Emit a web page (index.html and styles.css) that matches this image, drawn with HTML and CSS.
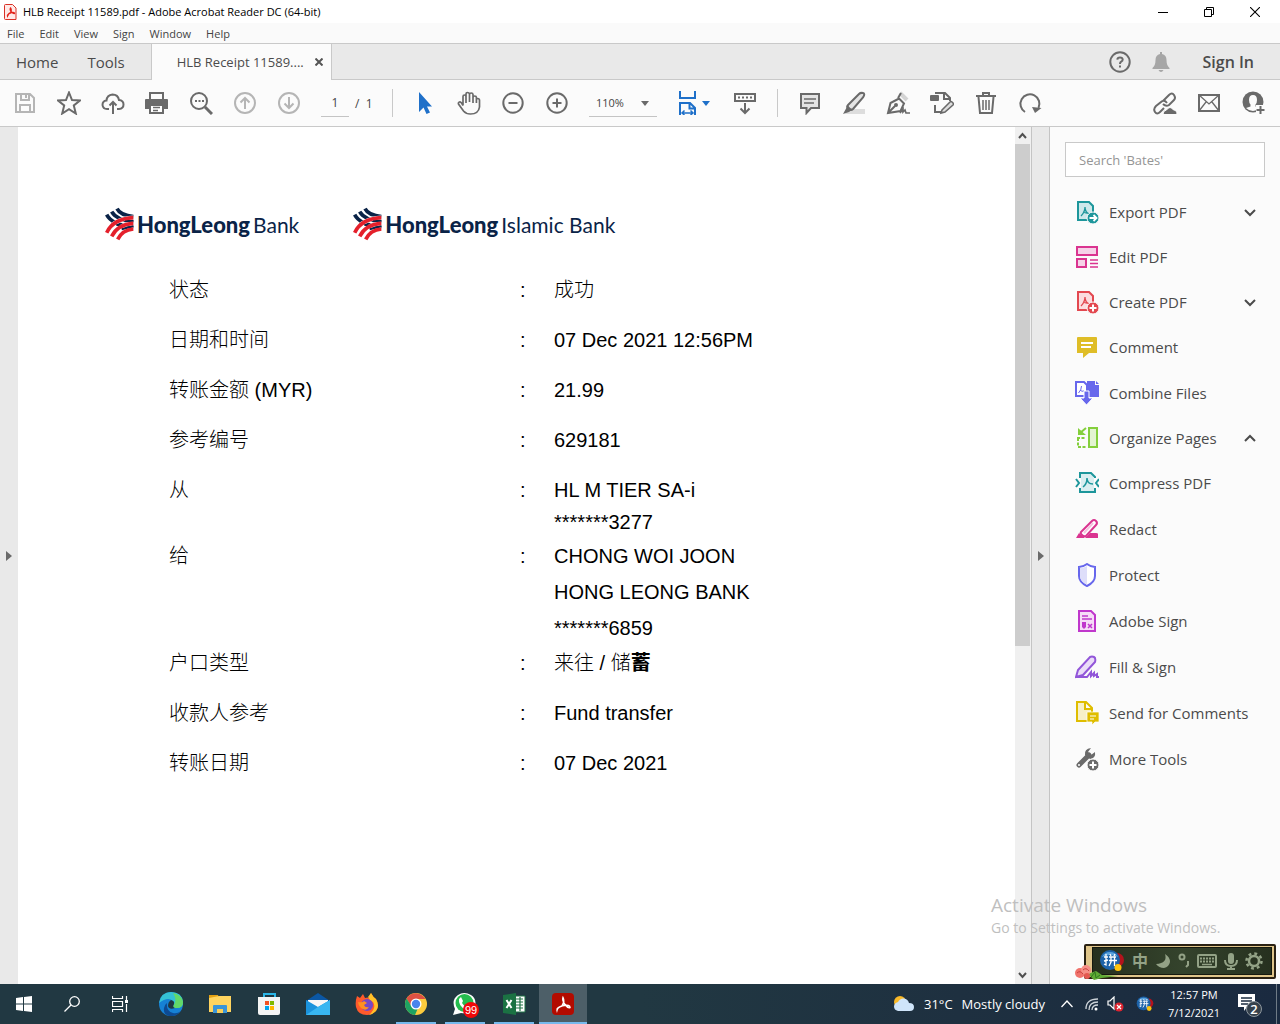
FILE: index.html
```html
<!DOCTYPE html>
<html lang="en">
<head>
<meta charset="utf-8">
<title>HLB Receipt 11589.pdf - Adobe Acrobat Reader DC (64-bit)</title>
<link rel="stylesheet" href="styles.css">
</head>
<body>
<svg class="defs" width="0" height="0" aria-hidden="true">
  <symbol id="hl-mark" viewBox="0 0 87 100">
    <g fill="none" stroke="#0a2347" stroke-width="11"><path d="M36 4Q46 24 85 28"/><path d="M20 13Q34 38 85 44"/><path d="M5 22Q20 52 85 60"/></g>
    <g fill="none" stroke="#fff" stroke-width="13"><path d="M5 76Q25 34 85 31"/><path d="M20 87Q38 51 85 48"/><path d="M38 96Q52 68 85 65"/></g>
    <g fill="none" stroke="#0a2347" stroke-width="6"><path d="M34 52L58 56M60 41L85 40M50 66L85 57"/></g>
    <g fill="none" stroke="#e4202b" stroke-width="11"><path d="M5 76Q25 34 85 31"/><path d="M20 87Q38 51 85 48"/><path d="M38 96Q52 68 85 65"/></g>
  </symbol>
  <symbol id="pin-ball" viewBox="0 0 26 22">
    <circle cx="18" cy="10" r="7" fill="#b3131c"/><circle cx="11" cy="10" r="10" fill="#1c62a8"/><path d="M3 7a9 9 0 0 1 16 0q-8-4-16 0" fill="#5ba3dc"/>
    <path d="M5 7h4M7 4v11l-2-1M5 11l4-1M11 4l1 2M16 4l-1 2M10 7h7M10 10.500h8M12 7v5l-2 4M15.500 7v9" fill="none" stroke="#fff" stroke-width="1.300"/>
    <circle cx="19" cy="17.500" r="3.500" fill="#ffc30d"/>
  </symbol>
</svg>

<header class="titlebar">
  <svg width="13" height="16" viewBox="0 0 13 16"><path d="M1.500.500h7L12 4v11.500H1.500q-1 0-1-1v-13q0-1 1-1z" fill="#ffe9e7" stroke="#d93025"/><path d="M3.500 12q-.500-1.500 3-3 1.500-3 0-5-1 1.500 1 4 2 2 3 1.500.500-1.500-3-1-3 .500-4 3.500z" fill="none" stroke="#e2231a" stroke-width="1.300"/></svg>
  <h1>HLB Receipt 11589.pdf - Adobe Acrobat Reader DC (64-bit)</h1>
  <div class="window-buttons">
    <button aria-label="Minimize"><svg width="10" height="10"><path d="M0 5.500h10" stroke="#000"/></svg></button>
    <button aria-label="Restore"><svg width="10" height="10" fill="none" stroke="#000"><path d="M.500 2.500h7v7h-7zM2.500 2.500v-2h7v7h-2"/></svg></button>
    <button aria-label="Close"><svg width="10" height="10" stroke="#000" stroke-width="1.100"><path d="M0 0l10 10M10 0L0 10"/></svg></button>
  </div>
</header>

<nav class="menubar">
  <button>File</button><button>Edit</button><button>View</button><button>Sign</button><button>Window</button><button>Help</button>
</nav>

<div class="tabs">
  <button class="tab home">Home</button>
  <button class="tab tools">Tools</button>
  <div class="tab-active"><span>HLB Receipt 11589....</span><button aria-label="Close tab"><svg width="8" height="8" stroke="#555" stroke-width="2"><path d="M.500.500l7 7M7.500.500l-7 7"/></svg></button></div>
  <div class="account">
    <button aria-label="Help"><svg width="22" height="22" viewBox="0 0 22 22" fill="none" stroke="#6a6a6a" stroke-width="2"><circle cx="11" cy="11" r="9.700"/><path d="M8.300 8.700q.200-2.200 2.700-2.200t2.700 2q0 1.300-1.500 2.200-1.200.700-1.200 2.300M11 14.500v2"/></svg></button>
    <button aria-label="Notifications"><svg width="18" height="20" viewBox="0 0 18 20" fill="#a6a6a6"><path d="M8 0h2v2q4.500 1 4.500 6 0 5.500 3 8v1H.500v-1q3-2.500 3-8 0-5 4.500-6zM6.500 18h5q-1 2-2.500 2t-2.500-2z"/></svg></button>
    <button class="signin">Sign In</button>
  </div>
</div>

<div class="toolbar">
  <div class="group">
    <button class="dim" aria-label="Save"><svg viewBox="0 0 24 24"><path d="M3 3h14l4 4v14H3zM8 3v6h8V3M13 4v3M7 21v-7h10v7"/></svg></button>
    <button aria-label="Star"><svg viewBox="0 0 24 24"><path d="M12 1.500l3 7.500 8 .500-6.200 5 2 8-6.800-4.400-6.800 4.400 2-8L1 9.500 9 9z"/></svg></button>
    <button aria-label="Upload"><svg viewBox="0 0 24 24"><path d="M8 18H6q-4 0-4.500-4 0-4 4-4.500Q6 4 11.500 3.500 17 3.500 18 9q4.500.500 4.500 4.500T18 18h-2M12 23V11M8.500 14.500L12 11l3.500 3.500"/></svg></button>
    <button aria-label="Print"><svg viewBox="0 0 24 24"><path d="M5 8V2h13v6"/><path d="M0 9q0-1 1-1h21q1 0 1 1v9H0z" fill="#6a6a6a" stroke="none"/><path d="M5 14h13v8H5z" fill="#fff"/><path d="M8 16.500h7M8 19.500h5" stroke-width="1.500"/></svg></button>
    <button aria-label="Find"><svg viewBox="0 0 24 24"><circle cx="10" cy="10" r="8"/><path d="M16 16l7 7" stroke-width="3"/><path d="M6 10h2M9.500 10h2M13 10h2" stroke-width="1.800"/></svg></button>
    <button class="dim" aria-label="Previous page"><svg viewBox="0 0 24 24"><circle cx="12" cy="12" r="10"/><path d="M12 18V7M7.500 11.500L12 7l4.500 4.500"/></svg></button>
    <button class="dim" aria-label="Next page"><svg viewBox="0 0 24 24"><circle cx="12" cy="12" r="10"/><path d="M12 6v11M7.500 12.500L12 17l4.500-4.500"/></svg></button>
  </div>
  <label class="page"><input type="text" value="1" aria-label="Page number"><span>/&nbsp; 1</span></label>
  <i class="sep"></i>
  <div class="group">
    <button aria-label="Select"><svg viewBox="0 0 24 24"><path d="M6 1v20l4.500-4.500 3 6.500 3.500-1.500-3-6H19z" fill="#1f70c9" stroke="none"/></svg></button>
    <button aria-label="Hand"><svg viewBox="0 0 24 24" stroke-width="1.700"><path d="M6 14.500V5.500q0-1.500 1.500-1.500T9 5.500V12M9 11V3q0-1.500 1.500-1.500T12.500 3v8M12.500 10V3.500q0-1.500 1.700-1.500T16 3.500V12M16 11V6.500Q16 5 17.700 5t1.700 1.500M19.400 12V9q0-1.500 1.400-1.500T22.500 9v7q-1 7-9 7-4.500 0-7-3L1.500 13q-.500-1.500 1-2t3.500 3.500M19.400 6.500V12"/></svg></button>
    <button aria-label="Zoom out"><svg viewBox="0 0 24 24"><circle cx="12" cy="12" r="9.700"/><path d="M7.500 12h9"/></svg></button>
    <button aria-label="Zoom in"><svg viewBox="0 0 24 24"><circle cx="12" cy="12" r="9.700"/><path d="M7.500 12h9M12 7.500v9"/></svg></button>
  </div>
  <div class="zoom"><select aria-label="Zoom level"><option>110%</option></select><svg class="caret" viewBox="0 0 8 5"><path d="M0 0h8L4 5z"/></svg></div>
  <button class="fit" aria-label="Fit width"><svg viewBox="0 0 24 24"><g fill="none" stroke="#1f70c9"><path d="M3 0v7h15V0M3 24V12h10l5 5v7M12.500 12v5.500H18"/><path d="M5 22h11M7.500 19.500L5 22l2.500 2M13.500 19.500L16 22l-2.500 2" stroke-width="1.500"/></g></svg><svg class="caret" viewBox="0 0 8 5"><path d="M0 0h8L4 5z" fill="#1f70c9"/></svg></button>
  <button class="tool" aria-label="Scroll mode"><svg viewBox="0 0 24 24"><path d="M2 3h20v7H2zM12 12v10M7.500 17.500L12 22l4.500-4.500"/><path d="M5 6.500h14" stroke-dasharray="2 2"/></svg></button>
  <i class="sep"></i>
  <div class="group">
    <button aria-label="Comment"><svg viewBox="0 0 24 24"><path d="M3 3h18v14h-8l-4.500 5v-5H3z" fill="#e4e4e4"/><path d="M6 8h12M6 12h10" stroke-width="1.500"/></svg></button>
    <button aria-label="Highlight"><svg viewBox="0 0 24 24"><path d="M7 18h16v5H3z" fill="#ddd" stroke="none"/><path d="M6 14L17 3q1.500-1.500 4-1t0 4.500L11 18q-2 2-4.500 0T6 14z" fill="#e4e4e4"/><path d="M6 14q2 4 5 4l-4 3-6 2z" fill="#6a6a6a" stroke="none"/></svg></button>
    <button aria-label="Sign"><svg viewBox="0 0 24 24"><path d="M14 2l7 7" stroke="#d4d4d4" stroke-width="4"/><path d="M2 22L4.500 12l8.500-4.500 5 5-3.500 7.500zM2 22l7-7M12 7l3-5"/><circle cx="10" cy="14" r="1"/><path d="M14 22l3-4v3l2-2 1 3h4" stroke-width="1.700"/></svg></button>
    <button aria-label="Edit text"><svg viewBox="0 0 24 24"><path d="M5 2h10l5 5v3M14 2v6h5M5 14v7h6"/><rect y="4" width="9" height="6" rx="1" fill="#6a6a6a" stroke="none"/><path d="M12 19l8-8q1-1 2 0l1 1q1 1 0 2l-8 7-4 1z" fill="#ddd" stroke-width="1.600"/></svg></button>
    <button aria-label="Delete"><svg viewBox="0 0 24 24"><path d="M2 5h20M9 4V2h6v2M4.500 6L6 22h12l1.500-16"/><path d="M9 9v10M12 9v10M15 9v10" stroke-width="1.500"/></svg></button>
    <button aria-label="Rotate"><svg viewBox="0 0 24 24"><path d="M7 21A9.500 9.500 0 1 1 20.500 17"/><path d="M14 16l9.500 1-6.500 5z" fill="#6a6a6a" stroke="none"/></svg></button>
  </div>
  <div class="group end">
    <button aria-label="Share link"><svg viewBox="0 0 24 24"><path d="M10 10l6-6q3-3 5 0t0 5l-5 5q-3 2-6-1M14 12q-3-4-6-1l-5 4q-3 3-1 6t5 0l4-4"/><path d="M10 23.500q0-4 3.500-4.500 3.500-5 7 0 3.500 0 3.500 4.500z" fill="#6a6a6a" stroke="#fbfbfb" stroke-width="1"/></svg></button>
    <button aria-label="Mail"><svg viewBox="0 0 24 24"><path d="M2 4h20v16H2z"/><path d="M2 4l10 9L22 4M2 20l7-9M22 20l-7-9" stroke-width="1.300"/></svg></button>
    <button aria-label="Share with people"><svg viewBox="0 0 24 24"><circle cx="12" cy="11" r="10.500" fill="#6a6a6a" stroke="none"/><path d="M12 4q4 0 4 5 0 3-1.500 4.500v2l4.500 1.500q-3 3-7 3t-7-3l4.500-1.500v-2Q8 12 8 9q0-5 4-5z" fill="#fbfbfb" stroke="none"/><path d="M15 14h9v10h-9z" fill="#fbfbfb" stroke="none"/><path d="M19.500 15v8M15.500 19h8"/></svg></button>
  </div>
</div>

<main class="workspace">
  <button class="rail-left" aria-label="Show navigation pane"><svg width="6" height="10"><path d="M0 0l6 5-6 5z" fill="#6a6a6a"/></svg></button>
  <section class="document">
    <div class="logos">
      <div class="logo"><svg width="29" height="34"><use href="#hl-mark"/></svg><b>HongLeong</b><span>Bank</span></div>
      <div class="logo"><svg width="29" height="34"><use href="#hl-mark"/></svg><b>HongLeong</b><span>Islamic Bank</span></div>
    </div>
    <table class="receipt" lang="zh-CN">
      <tr><th scope="row">状态</th><td>:</td><td>成功</td></tr>
      <tr><th scope="row">日期和时间</th><td>:</td><td>07 Dec 2021 12:56PM</td></tr>
      <tr><th scope="row">转账金额 (MYR)</th><td>:</td><td>21.99</td></tr>
      <tr><th scope="row">参考编号</th><td>:</td><td>629181</td></tr>
      <tr class="from"><th scope="row">从</th><td>:</td><td>HL M TIER SA-i<br>*******3277</td></tr>
      <tr class="to"><th scope="row">给</th><td>:</td><td>CHONG WOI JOON<br>HONG LEONG BANK<br>*******6859</td></tr>
      <tr class="type"><th scope="row">户口类型</th><td>:</td><td>来往 / 储<b>蓄</b></td></tr>
      <tr><th scope="row">收款人参考</th><td>:</td><td>Fund transfer</td></tr>
      <tr><th scope="row">转账日期</th><td>:</td><td>07 Dec 2021</td></tr>
    </table>
  </section>
  <div class="scrollbar">
    <svg viewBox="0 0 15 17"><path d="M4 11l3.500-4L11 11" fill="none" stroke="#505050" stroke-width="2"/></svg>
    <div class="track"><div class="thumb"></div></div>
    <svg viewBox="0 0 15 17"><path d="M4 6l3.500 4L11 6" fill="none" stroke="#505050" stroke-width="2"/></svg>
  </div>
  <button class="rail-right" aria-label="Hide tools pane"><svg width="6" height="10"><path d="M0 0l6 5-6 5z" fill="#6a6a6a"/></svg></button>
  <aside class="tools-pane">
    <input type="text" placeholder="Search 'Bates'" aria-label="Search tools">
    <ul>
      <li class="more"><a href="#"><svg viewBox="0 0 24 24"><path d="M3 2h11l4 4v14H3z" fill="#cde8ea" stroke="#1d969b" stroke-width="2"/><path d="M6 16q4-4 4-9 0 6 5 7M8 12q2 1 4 1" stroke="#1d969b" fill="none" stroke-width="1.300"/><circle cx="18" cy="18" r="6" fill="#1d969b" stroke="#fbfbfb"/><path d="M14.500 18h6M18.500 15l3 3-3 3" stroke="#fff" stroke-width="1.800" fill="none"/></svg>Export PDF</a><svg class="chev" viewBox="0 0 12 7"><path d="M1 1l5 5 5-5"/></svg></li>
      <li><a href="#"><svg viewBox="0 0 24 24" fill="#f6d2e8" stroke="#da3490" stroke-width="2"><path d="M2 2h20v8H2zM2 14h9v8H2z"/><path d="M15 15h8M15 18.500h8M15 22h8" stroke-width="1.300"/></svg>Edit PDF</a></li>
      <li class="more"><a href="#"><svg viewBox="0 0 24 24"><path d="M3 2h11l4 4v14H3z" fill="#fbdcdf" stroke="#e34850" stroke-width="2"/><path d="M6 16q4-4 4-9 0 6 5 7M8 12q2 1 4 1" stroke="#e34850" fill="none" stroke-width="1.300"/><circle cx="18" cy="18" r="6" fill="#e34850" stroke="#fbfbfb"/><path d="M14.500 18h7M18 14.500v7" stroke="#fff" stroke-width="2"/></svg>Create PDF</a><svg class="chev" viewBox="0 0 12 7"><path d="M1 1l5 5 5-5"/></svg></li>
      <li><a href="#"><svg viewBox="0 0 24 24"><path d="M3 2h18q1 0 1 1v15h-8l-6 5v-5H2V3q0-1 1-1z" fill="#dfbd27"/><path d="M6 8h12M6 12h10" stroke="#fff" stroke-width="2"/></svg>Comment</a></li>
      <li><a href="#"><svg viewBox="0 0 24 24"><path d="M12 0h8v4h4v12H12z" fill="#6767ec"/><path d="M21 0l3 3h-3z" fill="#6767ec"/><path d="M1 1h8l3 3v11H1z" fill="#fff" stroke="#6767ec" stroke-width="2"/><path d="M3.500 12q3-3 3-7M5 9q2 2 4 1" stroke="#6767ec" fill="none"/><path d="M9 10h5v7h4l-6.500 7L5 17h4z" fill="#6767ec" stroke="#fff"/></svg>Combine Files</a></li>
      <li class="more"><a href="#"><svg viewBox="0 0 24 24" fill="none" stroke="#84cf3c" stroke-width="2"><path d="M14 2h8v19h-8z" fill="#e3f4d2"/><path d="M2 12h9M3 12v9h9" stroke-dasharray="3 1.500"/><path d="M11 2L5 7"/><path d="M3 2v7h8z" fill="#84cf3c" stroke="none"/></svg>Organize Pages</a><svg class="chev" viewBox="0 0 12 7"><path d="M1 6l5-5 5 5"/></svg></li>
      <li><a href="#"><svg viewBox="0 0 24 24" fill="none" stroke="#1d969b" stroke-width="2"><path d="M5 7V2h11l4 4v1M20 17v4H5v-4" fill="#d9eef0"/><path d="M6 6h13v11H6z" fill="#d9eef0" stroke="none"/><path d="M1 8l3 4-3 4M24 8l-3 4 3 4"/><path d="M8 16q4-3 4-9 0 6 6 6" stroke-width="1.500"/></svg>Compress PDF</a></li>
      <li><a href="#"><svg viewBox="0 0 24 24"><path d="M10 21l5-5h6q2 0 2 1v4zM1 21l3-5 6 5z" fill="#da3490"/><path d="M6 15L17 4q2-2 4 0t0 4L11 19q-2 1-4-1t-1-3z" fill="#fff" stroke="#da3490" stroke-width="2"/><path d="M9 16L18 6" stroke="#f5c1df" stroke-width="2"/></svg>Redact</a></li>
      <li><a href="#"><svg viewBox="0 0 24 24"><path d="M12 1q4 3 8 3v9q0 6-8 10-8-4-8-10V4q4 0 8-3z" fill="#fff" stroke="#6767ec" stroke-width="2"/><path d="M12 3v19q-7-4-7-9V5q4 0 7-2z" fill="#dedefa"/></svg>Protect</a></li>
      <li><a href="#"><svg viewBox="0 0 24 24"><path d="M4 2h12l4 4v16H4z" fill="#f6dcf7" stroke="#c038cc" stroke-width="2"/><path d="M7 7h6M7 10h10M13 15l4 4M17 15l-4 4" stroke="#c038cc" stroke-width="1.500"/><path d="M7 13h4v5l-2 2-2-2z" fill="#c038cc"/></svg>Adobe Sign</a></li>
      <li><a href="#"><svg viewBox="0 0 24 24" fill="none" stroke="#9256d9" stroke-width="2"><path d="M1 22l2-7L15 2q2-1 4 0t1 5L8 20z" fill="#eadcf8"/><path d="M1 22h11l4-5v4l3-3v3l3-2v3h2"/></svg>Fill &amp; Sign</a></li>
      <li><a href="#"><svg viewBox="0 0 24 24"><path d="M2 1h9l6 6v13H2zM10 1v7h7" fill="#f7f0c8" stroke="#dfbd00" stroke-width="2"/><path d="M12 11h12v10h-4l-3 3v-3h-5z" fill="#dfbd00" stroke="#fff" stroke-width=".700"/><path d="M15 15h6M15 18h4" stroke="#fff"/></svg>Send for Comments</a></li>
      <li><a href="#"><svg viewBox="0 0 24 24"><path d="M4 18L14 8" stroke="#6a6a6a" stroke-width="5" stroke-linecap="round"/><path d="M10 8q-1-6 6-7l-3 4 3 3 4-3q1 6-5 7z" fill="#6a6a6a"/><circle cx="4" cy="18" r="1" fill="#fff"/><circle cx="18" cy="18" r="6" fill="#6a6a6a" stroke="#fbfbfb"/><path d="M14.500 18h7M18 14.500v7" stroke="#fff" stroke-width="2"/></svg>More Tools</a></li>
    </ul>
  </aside>
  <div class="watermark"><p class="big">Activate Windows</p><p>Go to Settings to activate Windows.</p></div>
  <div class="ime">
    <div class="ime-board">
      <svg width="26" height="22"><use href="#pin-ball"/></svg>
      <span lang="zh-CN">中</span>
      <svg width="16" height="16" viewBox="0 0 16 16"><path d="M10 1q3 9-9 10 3 4 8 4 5-1 6-6 0-5-5-8z" fill="#93a286"/></svg>
      <svg width="12" height="16" viewBox="0 0 12 16" fill="none" stroke="#93a286" stroke-width="2"><circle cx="4" cy="4" r="2.500"/><path d="M10 8v4l-2 2"/></svg>
      <svg width="20" height="14" viewBox="0 0 20 14"><rect x="1" y="1" width="18" height="12" rx="1" fill="none" stroke="#93a286" stroke-width="2"/><path d="M3 4.500h14M3 7.500h14" stroke="#93a286" stroke-width="2" stroke-dasharray="2 1"/><path d="M5 10.500h10" stroke="#93a286" stroke-width="1.500"/></svg>
      <svg width="14" height="17" viewBox="0 0 14 17"><rect x="4" width="6" height="11" rx="3" fill="#93a286"/><path d="M1 7q0 6 6 6t6-6M7 13v3M3 16h8" fill="none" stroke="#93a286" stroke-width="2"/></svg>
      <svg width="18" height="18" viewBox="0 0 18 18" fill="none" stroke="#93a286"><circle cx="9" cy="9" r="5" stroke-width="2.500"/><circle cx="9" cy="9" r="7.500" stroke-width="2.500" stroke-dasharray="2.900 3"/></svg>
    </div>
    <svg class="flower" width="44" height="16" viewBox="0 0 44 16"><path d="M14 9l8-3 6 4 16 1-16 2-8 2z" fill="#5faa35"/><path d="M17 12l4-5 1 6 4-3" stroke="#2e7a1d" fill="none"/><circle cx="6" cy="8" r="5" fill="#f0736c"/><circle cx="12" cy="5" r="5" fill="#f58f86"/><circle cx="13" cy="11" r="3" fill="#e45850"/><path d="M3 8q3-3 6 1M9 5q3-3 6 1" fill="none" stroke="#c93f3d"/></svg>
  </div>
</main>

<footer class="taskbar">
  <div class="system">
    <button aria-label="Start"><svg width="16" height="16" viewBox="0 0 16 16" fill="#fff"><path d="M0 2l7-1v6.500H0zM8 1l8-1v7.500H8zM0 8.500h7V15l-7-1zM8 8.500h8V16l-8-1z"/></svg></button>
    <button aria-label="Search"><svg width="16" height="16" viewBox="0 0 16 16" fill="none" stroke="#fff" stroke-width="1.300"><circle cx="10.500" cy="5.500" r="4.800"/><path d="M7 9L.500 15.500"/></svg></button>
    <button aria-label="Task view"><svg width="16" height="16" viewBox="0 0 16 16" fill="none" stroke="#fff" stroke-width="1.200"><path d="M.500 0v2.500h10V0M.500 5.500h10v5H.500zM.500 16v-2.500h10V16M14.500 0v4M14.500 8v8"/><path d="M13 4h3v3h-3z" fill="#fff" stroke="none"/></svg></button>
  </div>
  <div class="apps">
    <button aria-label="Edge"><svg viewBox="0 0 24 24"><circle cx="12" cy="12" r="12" fill="#1681d4"/><path d="M0 11Q2 0 12 0q11 0 12 10 0 6-6 6-4 0-4-2 2-2 0-5-5-5-14 2z" fill="#35c1d5"/><path d="M14 1q9 2 10 9 0 6-6 6-4 0-4-2 5-5 0-13z" fill="#62d968"/><path d="M8 11q-1 8 6 10 4 1 8-2-5 6-12 5-6-2-5-8 1-4 3-5z" fill="#0d4a92"/><path d="M12 8q4 1 3 4-2 3 1 4-6 2-7-2 0-4 3-6z" fill="#213842"/></svg></button>
    <button aria-label="File Explorer"><svg viewBox="0 0 24 24"><path d="M1 3h9l1 3H1z" fill="#e2a013"/><path d="M1 6l10-2h12v16H1z" fill="#ffd45f"/><path d="M5 14q0-1 1-1h12q1 0 1 1v7h-4v-4H9v4H5z" fill="#3a95d8"/><path d="M9 17h6v4H9z" fill="#f9cf59"/></svg></button>
    <button aria-label="Store"><svg viewBox="0 0 24 24"><path d="M7 6V2h11v4" fill="none" stroke="#2cb6e7" stroke-width="2"/><path d="M1 5h22v16q0 2-2 2H3q-2 0-2-2z" fill="#f4f4f4"/><path d="M8 9h4v4H8z" fill="#f15021"/><path d="M13 9h4v4h-4z" fill="#7eb900"/><path d="M8 14h4v4H8z" fill="#00a3ee"/><path d="M13 14h4v4h-4z" fill="#ffb800"/></svg></button>
    <button aria-label="Mail"><svg viewBox="0 0 24 24"><path d="M0 9l12-8 12 8H0z" fill="#0b57a4"/><path d="M2 8h20v8H2z" fill="#f6f6f6"/><path d="M0 8l12 7 12-7v15H0z" fill="#1b93dc"/><path d="M24 8v15H0l12-8z" fill="#38b6f1"/></svg></button>
    <button aria-label="Firefox"><svg viewBox="0 0 24 24"><path d="M2 4l3 2 3-4 2 4q3-1 4 0l2-5q2 4 5 6 4 7 0 12-4 4-9 4-9 0-11-8Q0 10 2 4z" fill="#ff5a2c"/><path d="M16 1q2 4 5 6 4 7 0 12-3 3-7 4 8-7 4-13-4-2-5-5z" fill="#ffc328"/><circle cx="12" cy="13" r="6" fill="#7549c6"/><path d="M3 10q5 1 6-1l3 2-3 2q1 3 5 2-3 5-8 1-3-3-3-6z" fill="#ff9120"/></svg></button>
    <button class="open" aria-label="Chrome"><svg viewBox="0 0 24 24"><circle cx="12" cy="12" r="11" fill="#fbcb3d"/><path d="M2.500 6.500A11 11 0 0 1 21.500 7H12l-5 7z" fill="#dd5144"/><path d="M2.500 6.500L8 15l6 1-3 7A11 11 0 0 1 2.500 6.500z" fill="#1ea362"/><circle cx="12" cy="12" r="5.500" fill="#fff"/><circle cx="12" cy="12" r="4.200" fill="#4a85ec"/></svg></button>
    <button class="open" aria-label="WhatsApp"><svg viewBox="0 0 24 24"><path d="M0 23l2-6Q-2 8 5 3q6-4 13 0 6 4 4 11-3 9-14 7z" fill="#fff"/><circle cx="11.500" cy="11" r="9" fill="#25bd4e"/><path d="M8 5l2 4-1 2q2 3 4 4l2-2 3 2q-1 4-5 3Q5 14 6 7z" fill="#fff"/></svg><span class="badge">99</span></button>
    <button class="open" aria-label="Excel"><svg viewBox="0 0 24 24"><path d="M12 4h11v16H12z" fill="#fff" stroke="#217346"/><path d="M14 7h7M14 10h7M14 13h7M14 16h7M18 5v14" stroke="#217346" stroke-width="1.200"/><path d="M1 3l13-2v22L1 21z" fill="#1b7243"/><path d="M4.500 8l5 8M9.500 8l-5 8" stroke="#fff" stroke-width="2"/></svg></button>
    <button class="open current" aria-label="Acrobat Reader"><svg viewBox="0 0 24 24"><rect x="1" y="1" width="22" height="22" rx="4" fill="#b30b00"/><path d="M6 18q-.500-2 5-4 3-5 1-8.500-1 3 2 7t5 3q0-3-6-2-6 1-7 4.500z" fill="none" stroke="#fff" stroke-width="1.500"/></svg></button>
  </div>
  <div class="tray">
    <a href="#" class="weather"><svg width="22" height="18" viewBox="0 0 22 18"><circle cx="7" cy="7" r="6" fill="#f9b928"/><path d="M5 16q-4-1-4-4.500T5 7q2-4 6-3.500T16 8q5 0 5 4t-4 4z" fill="#cfe5fa"/></svg><span>31°C</span><span>Mostly cloudy</span></a>
    <svg class="up" width="12" height="8" fill="none" stroke="#fff" stroke-width="1.300"><path d="M.500 7L6 1l5.500 6"/></svg>
    <svg width="14" height="14" viewBox="0 0 14 14" fill="none" stroke="#ccd3d8" stroke-width="1.300"><path d="M1 12Q1 2 13 2M4 13q0-8 9-8M7 13q0-5 6-5"/><circle cx="11" cy="12" r="1.500" fill="#fff" stroke="none"/></svg>
    <svg class="sound" width="17" height="16" viewBox="0 0 17 16"><path d="M1 5h2l4-4v12L3 9H1z" fill="none" stroke="#fff" stroke-width="1.200"/><circle cx="12" cy="11" r="4.500" fill="#dc2430"/><path d="M10 9l4 4M14 9l-4 4" stroke="#fff" stroke-width="1.200"/></svg>
    <svg class="pin" width="18" height="16"><use href="#pin-ball"/></svg>
    <time>12:57 PM<br>7/12/2021</time>
    <button class="notice" aria-label="Notifications"><svg width="26" height="26" viewBox="0 0 26 26"><path d="M0 1h17v13h-8l-3 4v-4H0z" fill="#fff"/><path d="M3 5h11M3 8h11M3 11h7" stroke="#1b2d40" stroke-width="1.500"/><circle cx="16" cy="16" r="7.500" fill="#34404b" stroke="#8e979e"/><text x="16" y="21" text-anchor="middle">2</text></svg></button>
  </div>
</footer>
</body>
</html>
```

FILE: styles.css
```css
* { box-sizing: border-box; }
body {
  margin: 0;
  min-height: 100vh;
  display: flex;
  flex-direction: column;
  font-family: "Open Sans", "Noto Sans CJK SC", sans-serif;
  font-size: 12px;
  color: #444;
  background: #fbfbfb;
}
button, input, select { font: inherit; color: inherit; }
button { border: 0; padding: 0; background: none; }
a { color: inherit; text-decoration: none; }
svg { display: block; flex: none; }
.defs { position: absolute; }

.titlebar { height: 23px; display: flex; align-items: center; gap: 6px; padding-left: 4px; background: #fff; }
.titlebar h1 { margin: 0; font-size: 11px; font-weight: 400; color: #000; }
.window-buttons { display: flex; margin-left: auto; height: 100%; padding-right: 2px; }
.window-buttons button { width: 46px; display: grid; place-items: center; }

.menubar { height: 20px; display: flex; align-items: center; gap: 15px; padding: 0 7px; background: #fafafa; font-size: 11px; }

.tabs { height: 37px; display: flex; background: #e9e9e9; border-top: 1px solid #c9c9c9; border-bottom: 1px solid #c9c9c9; font-size: 15px; color: #4b4b4b; }
.tab.home { padding: 0 14px 0 16px; }
.tab.tools { padding: 0 26px 0 15px; }
.tab-active { width: 181px; height: 36px; display: flex; align-items: center; justify-content: space-between; padding: 0 8px 0 25px; background: #fbfbfb; border: solid #c9c9c9; border-width: 0 1px; font-size: 13px; white-space: nowrap; }
.account { margin-left: auto; display: flex; align-items: center; gap: 21px; padding-right: 26px; }
.signin { font-size: 16px; font-weight: 600; padding-left: 12px; }

.toolbar { height: 47px; display: flex; align-items: center; padding: 0 5px 0 3px; background: #fbfbfb; border-bottom: 1px solid #c9c9c9; }
.group { display: flex; }
.group button, .tool { width: 44px; height: 44px; display: grid; place-items: center; }
.toolbar svg { width: 24px; height: 24px; fill: none; stroke: #6a6a6a; }
.toolbar svg:not([stroke-width]) { stroke-width: 2; }
.toolbar .dim svg { stroke: #b5b5b5; }
.toolbar .caret { width: 8px; height: 5px; fill: #6a6a6a; stroke: none; }
.page { display: flex; align-items: center; gap: 6px; margin-left: 10px; width: 71px; }
.page input { width: 28px; height: 28px; padding: 0; text-align: center; border: 0; border-bottom: 1px solid #c4c4c4; background: none; }
.sep { width: 1px; height: 28px; background: #c9c9c9; margin-right: 10px; }
.zoom { display: grid; align-items: center; width: 68px; margin-left: 10px; }
.zoom select { grid-area: 1 / 1; height: 28px; appearance: none; border: 0; border-bottom: 1px solid #c4c4c4; padding: 0 7px; background: none; font-size: 11px; }
.zoom .caret { grid-area: 1 / 1; justify-self: end; margin-right: 8px; pointer-events: none; }
.fit { display: flex; align-items: center; gap: 1px; margin: 0 13px 0 20px; }
.tool { margin-right: 10px; }
.end { margin-left: auto; }

.workspace { flex: 1; display: flex; position: relative; background: #fff; }
.rail-left { width: 18px; background: #e9e9e9; display: grid; place-items: center; }
.rail-right { width: 19px; background: #e9e9e9; display: grid; place-items: center; border: solid #c4c4c4; border-width: 0 1px; }
.document { flex: 1; padding: 79px 87px; color: #000; }
.logos { display: flex; gap: 54px; height: 36px; }
.logo { display: flex; align-items: center; font-family: Lato, sans-serif; font-size: 22px; color: #0a2347; white-space: nowrap; }
.logo b { margin: 0 3px; font-weight: 900; }
.logo span { font-size: 21px; }
.receipt { margin: 23px 0 0 64px; border-collapse: collapse; font: 20px/32px "Liberation Sans", "Noto Sans CJK SC", sans-serif; }
.receipt th, .receipt td { padding: 9px 0; vertical-align: top; text-align: left; font-weight: 300; }
.receipt th { width: 351px; }
.receipt td:nth-child(2) { width: 34px; }
.receipt .from > * { padding-bottom: 0; }
.receipt .to > * { padding: 0; line-height: 36px; }
.receipt .type > * { padding-top: 1px; }
.receipt b { font-weight: 700; }

.scrollbar { width: 16px; display: flex; flex-direction: column; background: #f0f0f0; padding-right: 1px; }
.scrollbar svg { width: 15px; height: 17px; }
.track { flex: 1; }
.thumb { height: 61%; background: #cdcdcd; }

.tools-pane { width: 230px; background: #fbfbfb; padding: 15px; }
.tools-pane input { display: block; width: 100%; height: 35px; padding: 0 13px; border: 1px solid #c9c9c9; background: #fff; font-size: 13px; }
.tools-pane input::placeholder { color: #959595; opacity: 1; }
.tools-pane ul { list-style: none; margin: 13px 0 0; padding: 0; }
.tools-pane li { height: 46px; display: flex; align-items: center; justify-content: space-between; padding: 0 9px 0 10px; font-size: 15px; color: #4b4b4b; }
.tools-pane li.more { height: 44px; }
.tools-pane a { display: flex; align-items: center; gap: 10px; white-space: nowrap; }
.tools-pane a svg { width: 24px; height: 24px; }
.chev { width: 12px; height: 7px; fill: none; stroke: #4b4b4b; stroke-width: 2; overflow: visible; }

.watermark { position: absolute; right: 53px; bottom: 45px; width: 236px; color: #bfbfbf; font-size: 14px; line-height: 22px; white-space: nowrap; }
.watermark p { margin: 0; }
.watermark .big { font-size: 19px; line-height: 24px; }
.ime { position: absolute; right: 4px; bottom: 5px; width: 192px; height: 35px; background: #dfc58a; border: 2px solid #2a2113; border-radius: 2px; padding: 1px 2px 2px 6px; }
.ime-board { height: 100%; display: flex; align-items: center; justify-content: space-between; padding: 0 8px 0 6px; background: linear-gradient(90deg, #26301f, #34432c 50%, #26301f); border: 1px solid #15190f; }
.ime-board span { color: #93a286; font-size: 16px; font-weight: 700; line-height: 20px; }
.flower { position: absolute; left: -12px; bottom: -4px; }

.taskbar { height: 40px; display: flex; background: linear-gradient(90deg, #213842 0 50%, #1e3040 75%, #1a2a40); color: #fff; }
.system, .apps { display: flex; }
.apps { gap: 1px; margin-left: 3px; }
.taskbar .system button, .apps button { width: 48px; display: grid; place-items: center; position: relative; }
.apps svg { width: 24px; height: 24px; }
.apps .open::after { content: ""; position: absolute; left: 4px; right: 4px; bottom: 0; height: 2px; background: #76b9ed; }
.apps .current { background: #4d5f68; }
.apps .current::after { left: 0; right: 0; }
.badge { position: absolute; left: 22px; top: 18px; width: 16px; height: 16px; border-radius: 8px; background: #f00808; font: 11px/16px "Liberation Sans", sans-serif; text-align: center; }
.tray { margin-left: auto; display: flex; align-items: center; gap: 12px; padding-right: 3px; }
.weather { display: flex; align-items: center; gap: 9px; font-size: 13px; white-space: nowrap; }
.up { margin-left: 4px; }
.sound { margin-left: -4px; }
time { text-align: center; font-size: 11px; line-height: 18px; margin-left: 2px; }
.notice { border-right: 1px solid #6f7b86; height: 40px; padding: 4px 12px 0 6px; }
.notice text { font: 600 13px "Open Sans", sans-serif; fill: #fff; }
```
